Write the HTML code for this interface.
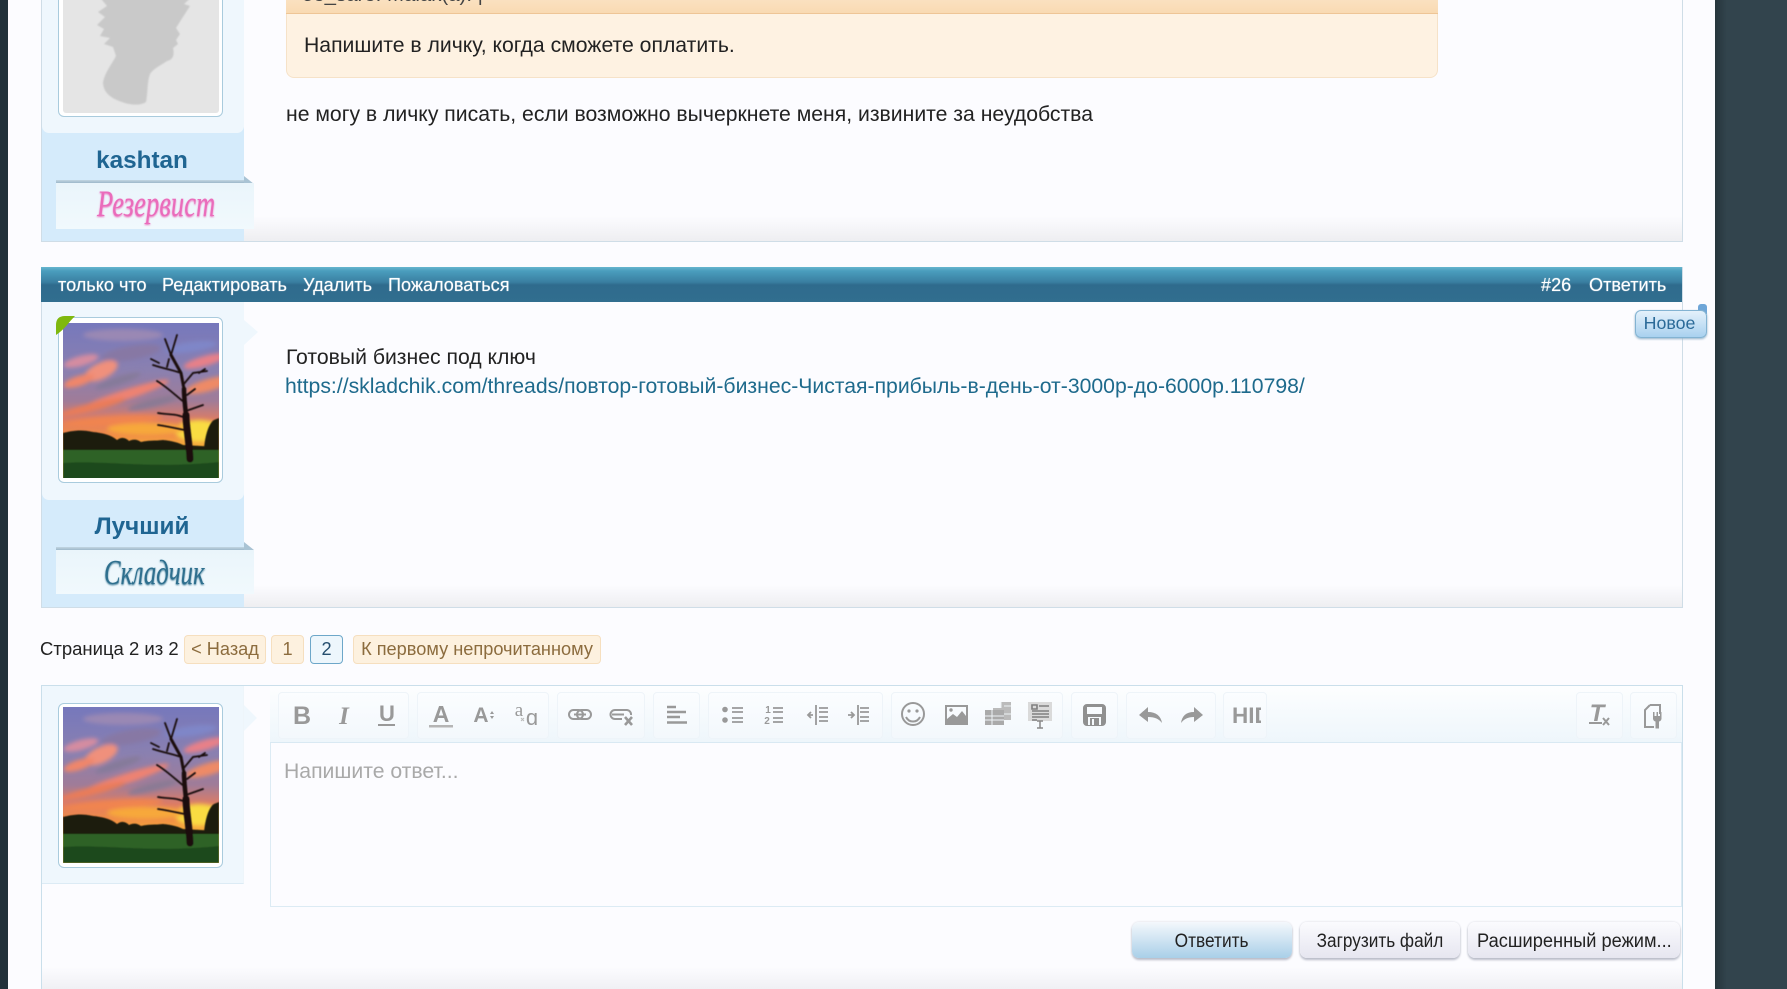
<!DOCTYPE html>
<html lang="ru"><head><meta charset="utf-8"><title>Складчик</title>
<style>
html,body{margin:0;padding:0;width:1787px;height:989px;overflow:hidden;background:#fcfcff}
body{position:relative;font-family:"Liberation Sans","Noto Sans CJK JP",sans-serif;color:#222}
.a{position:absolute;white-space:nowrap;box-sizing:border-box}
.t{font-size:21.2px;line-height:24px;color:#222}
.h{font-size:18.1px;line-height:22px;color:#fff;font-weight:400;text-shadow:0 0 1px rgba(255,255,255,.7)}
.side{background:#eff7fd}
.name{background:#d5ebfb}
.nm{font-weight:700;font-size:24.3px;line-height:30px;color:#1f6592;text-align:center;width:204px;left:40px}
.rib{background:linear-gradient(#eaf5fb,#f1f9fd)}
.shade{background:linear-gradient(#c3d6e2,#9db8ca)}
.script{font-family:"Liberation Serif",serif;font-style:italic;text-shadow:0 1px 2px currentColor}
.frame{border:1px solid #a9cbdd;border-radius:6px;background:#fff;width:165px;height:166px}
.pg{border:1px solid #f6dfbf;background:#fdf1df;border-radius:4px;height:29px;line-height:27px;font-size:18.2px;color:#8c6c3e;text-align:center}
.grp{border:1px solid #eef4f9;border-radius:4px;top:692px;height:47px;background:linear-gradient(#fbfdff,#f3f8fc)}
.btn{top:922px;height:36px;border-radius:7px;line-height:39px;text-align:center;font-size:19px;color:#222;box-shadow:0 2px 2px #b9bcc8,0 0 2px #d8dae0;background:linear-gradient(#fbfbfe,#e6e6f0)}
.btn span{display:inline-block}
</style></head><body>

<svg width="0" height="0" style="position:absolute"><defs>
<filter id="b2" x="-30%" y="-60%" width="160%" height="220%"><feGaussianBlur stdDeviation="2.2"/></filter>
<filter id="b1" x="-10%" y="-10%" width="120%" height="120%"><feGaussianBlur stdDeviation=".6"/></filter>
<filter id="b0" x="-10%" y="-10%" width="120%" height="120%"><feGaussianBlur stdDeviation=".8"/></filter>
<linearGradient id="sky" x1="0" y1="0" x2="0" y2="1"><stop offset="0" stop-color="#7678bc"/><stop offset=".3" stop-color="#8a80b0"/><stop offset=".5" stop-color="#a07c98"/><stop offset=".62" stop-color="#dc7c66"/><stop offset=".72" stop-color="#f08c46"/><stop offset=".8" stop-color="#f6b038"/></linearGradient>
<symbol id="av" viewBox="0 0 156 156">
<rect width="156" height="156" fill="url(#sky)"/>
<g filter="url(#b2)">
<ellipse cx="60" cy="12" rx="40" ry="6" fill="#9a88b4"/>
<ellipse cx="68" cy="30" rx="30" ry="7" fill="#8778a4" transform="rotate(-10 68 30)"/>
<ellipse cx="18" cy="38" rx="18" ry="5" fill="#d58ca0" transform="rotate(-15 18 38)"/>
<ellipse cx="38" cy="48" rx="18" ry="8" fill="#f0907c" transform="rotate(-25 38 48)"/>
<ellipse cx="16" cy="58" rx="16" ry="5" fill="#f0866a" transform="rotate(-18 16 58)"/>
<ellipse cx="55" cy="58" rx="24" ry="4" fill="#857a9a" transform="rotate(-18 55 58)"/>
<ellipse cx="62" cy="72" rx="46" ry="5" fill="#ee8272" transform="rotate(-18 62 72)"/>
<ellipse cx="30" cy="84" rx="34" ry="4" fill="#ea7c58" transform="rotate(-14 30 84)"/>
<ellipse cx="90" cy="80" rx="26" ry="4" fill="#8a7a94" transform="rotate(-14 90 80)"/>
<ellipse cx="142" cy="38" rx="22" ry="5" fill="#e88088" transform="rotate(-16 142 38)"/>
<ellipse cx="128" cy="24" rx="26" ry="5" fill="#7f86c8" transform="rotate(-8 128 24)"/>
<ellipse cx="146" cy="62" rx="24" ry="6" fill="#ee8a66" transform="rotate(-16 146 62)"/>
<ellipse cx="50" cy="98" rx="50" ry="5" fill="#f08450" transform="rotate(-4 50 98)"/>
<ellipse cx="136" cy="108" rx="24" ry="11" fill="#f9dc42"/>
<ellipse cx="84" cy="106" rx="40" ry="6" fill="#f7a83a"/>
</g>
<g filter="url(#b1)">
<path d="M0 110C8 108 18 106 30 109C40 110 48 112 54 117C58 114 62 114 66 118C70 116 74 116 78 119C86 117 92 118 100 117C110 118 116 120 120 122L156 124V130H0Z" fill="#1f1a10"/>
<path d="M141 126C142 112 146 100 151 97L156 95V128Z" fill="#1a1c10"/>
<rect y="127" width="156" height="29" fill="#2f6226"/>
<path d="M0 140C40 137 90 146 156 139V156H0Z" fill="#1e4a1a"/>
<g fill="none" stroke="#1a0f10" stroke-linecap="round">
<path d="M127 136C126 116 123 104 123 92" stroke-width="7"/>
<path d="M123 92C122 82 121 74 121 66" stroke-width="4.500"/>
<path d="M121 66L118 50L108 32" stroke-width="3"/>
<path d="M108 32L102 16M108 32L114 12M118 50C110 47 102 46 90 42M120 62L130 50L144 48M122 80C112 72 104 64 94 58M124 96C114 90 106 92 95 90M126 108C116 106 108 104 95 102M123 88L140 82M124 72L132 66M96 40L88 36M104 44L106 36M136 50L142 46" stroke-width="1.800"/>
</g>
</g>
</symbol>
</defs></svg>

<!-- side strips -->
<div class="a" style="left:0;top:0;width:8px;height:989px;background:#22313a"></div>
<div class="a" style="left:1715px;top:0;width:72px;height:989px;background:linear-gradient(90deg,#26353c,#32444d 12px)"></div>

<!-- POST 1 -->
<div class="a" style="left:41px;top:0;width:1642px;height:242px;border:solid #cfdde7;border-width:0 1px 1px 1px"></div>
<div class="a" style="left:244px;top:216px;width:1438px;height:25px;background:linear-gradient(#fcfcff,#eeeef1)"></div>
<div class="a name" style="left:42px;top:120px;width:202px;height:121px"></div>
<div class="a side" style="left:42px;top:0;width:202px;height:133px;border-radius:0 0 7px 7px"></div>
<div class="a" style="left:58px;top:-20px;width:165px;height:137px;border:1px solid #a9cbdd;border-radius:6px;background:#fff"></div>
<div class="a" style="left:63px;top:-20px;width:156px;height:133px;background:#e5e5e5;border-radius:3px;overflow:hidden">
<svg width="156" height="133" viewBox="63 -20 156 133" style="display:block"><path filter="url(#b0)" fill="#c9c9c9" d="M104 -20L102 0L107 6L98 12L105 17L97 25L104 29L100 36L110 38L104 44L113 47L116 56C112 64 105 72 103 82C103 92 110 98 122 102C130 105 140 106 146 102C148 92 147 82 150 74C154 68 160 66 167 61C172 60 175 56 173 48L178 44L176 40L180 34L176 28L181 20L190 6L184 4L195 -6L196 -20Z"/></svg></div>
<div class="a nm" style="top:146px">kashtan</div>
<svg class="a" style="left:244px;top:176px" width="11" height="8"><path d="M0 0L10 8H0Z" fill="#a9c3d4"/></svg>
<div class="a shade" style="left:56px;top:180px;width:188px;height:3px"></div>
<div class="a rib" style="left:56px;top:183px;width:198px;height:46px"></div>
<div class="a script" style="left:97px;top:183px;font-size:37px;line-height:44px;color:#ea6cbb;transform:scaleX(.72);transform-origin:0 0">Резервист</div>

<!-- quote -->
<div class="a" style="left:286px;top:-10px;width:1152px;height:88px;background:#fef2e2;border:1px solid #f6e2c8;border-radius:0 0 8px 8px"></div>
<div class="a" style="left:286px;top:-10px;width:1152px;height:24px;background:linear-gradient(#fbe6cb,#f9dab2);border-bottom:1px solid #eec596"></div>
<div class="a" style="left:302px;top:-16px;font-size:20.4px;line-height:22px;color:#444">ое_sare: Malak(а): |</div>
<div class="a t" style="left:304px;top:34px">Напишите в личку, когда сможете оплатить.</div>
<div class="a t" style="left:286px;top:103px">не могу в личку писать, если возможно вычеркнете меня, извините за неудобства</div>

<!-- POST 2 -->
<div class="a" style="left:41px;top:267px;width:1642px;height:341px;border:solid #cfdde7;border-width:0 1px 1px 1px"></div>
<div class="a" style="left:244px;top:585px;width:1438px;height:22px;background:linear-gradient(#fcfcff,#eeeef1)"></div>
<div class="a" style="left:41px;top:267px;width:1641px;height:35px;background:linear-gradient(#66b6cf 0,#4a9dbd 4px,#3a7fa1 15px,#2f6b8d 18px,#316e8f 100%)"></div>
<div class="a h" style="left:58px;top:274px">только что</div>
<div class="a h" style="left:162px;top:274px">Редактировать</div>
<div class="a h" style="left:303px;top:274px">Удалить</div>
<div class="a h" style="left:388px;top:274px">Пожаловаться</div>
<div class="a h" style="left:1541px;top:274px">#26</div>
<div class="a h" style="left:1589px;top:274px">Ответить</div>

<div class="a" style="left:1698px;top:304px;width:9px;height:10px;background:#6ea6d8;border-radius:3px 3px 0 0"></div>
<div class="a" style="left:1635px;top:310px;width:72px;height:28px;border:1px solid #83b3d2;border-radius:6px;background:linear-gradient(#e4f1fb,#a9d1ef);box-shadow:0 1px 2px #8fb0c8;color:#2b6a98;font-size:17.8px;line-height:25px;text-align:center;padding-right:3px">Новое</div>

<div class="a name" style="left:42px;top:480px;width:202px;height:127px"></div>
<div class="a side" style="left:42px;top:302px;width:202px;height:198px;border-radius:0 0 7px 7px"></div>
<div class="a" style="left:244px;top:320px;width:0;height:0;border-left:14px solid #eff7fd;border-top:12px solid transparent;border-bottom:13px solid transparent"></div>
<div class="a frame" style="left:58px;top:317px"></div>
<svg class="a" style="left:63px;top:323px" width="156" height="155"><use href="#av" width="156" height="156"/></svg>
<svg class="a" style="left:0;top:0" width="100" height="340" viewBox="0 0 100 340"><path d="M75 316H65Q56 316 56 325V335Q62 331 67 325Q71 320 75 316Z" fill="#7fb80e"/></svg>
<div class="a nm" style="top:512px">Лучший</div>
<svg class="a" style="left:244px;top:542px" width="11" height="8"><path d="M0 0L10 8H0Z" fill="#a9c3d4"/></svg>
<div class="a shade" style="left:56px;top:547px;width:188px;height:3px"></div>
<div class="a rib" style="left:56px;top:550px;width:198px;height:44px"></div>
<div class="a script" style="left:104px;top:551px;font-size:35px;line-height:44px;color:#2e6f8e;transform:scaleX(.71);transform-origin:0 0">Складчик</div>

<div class="a t" style="left:286px;top:346px">Готовый бизнес под ключ</div>
<div class="a t" style="left:285px;top:375px;color:#1e6a8c">https://skladchik.com/threads/повтор-готовый-бизнес-Чистая-прибыль-в-день-от-3000р-до-6000р.110798/</div>

<!-- PAGINATION -->
<div class="a" style="left:40px;top:637px;font-size:18.5px;line-height:24px;color:#222">Страница 2 из 2</div>
<div class="a pg" style="left:184px;top:635px;width:82px">&lt; Назад</div>
<div class="a pg" style="left:271px;top:635px;width:33px">1</div>
<div class="a pg" style="left:310px;top:635px;width:33px;background:#edf6fc;border-color:#6da7c9;color:#254e6e">2</div>
<div class="a pg" style="left:353px;top:635px;width:248px">К первому непрочитанному</div>

<!-- REPLY -->
<div class="a" style="left:41px;top:685px;width:1642px;height:320px;border:1px solid #cadfeb"></div>
<div class="a" style="left:42px;top:952px;width:1640px;height:37px;background:linear-gradient(#fcfcff 40%,#f0f0f4)"></div>
<div class="a side" style="left:42px;top:686px;width:202px;height:198px;border-bottom:1px solid #dcebf5;border-right:1px solid #eef5fa"></div>
<div class="a" style="left:244px;top:705px;width:0;height:0;border-left:13px solid #eff7fd;border-top:13px solid transparent;border-bottom:13px solid transparent"></div>
<div class="a frame" style="left:58px;top:703px;height:165px"></div>
<svg class="a" style="left:63px;top:707px" width="156" height="156"><use href="#av" width="156" height="156"/></svg>

<div class="a" style="left:270px;top:686px;width:1412px;height:221px;border:solid #dcebf4;border-width:0 1px 1px 1px;background:#fcfcff"></div>
<div class="a" style="left:270px;top:686px;width:1412px;height:57px;background:linear-gradient(#fdfeff,#eef6fb);border-bottom:1px solid #d9e9f3"></div>
<div class="a grp" style="left:278px;width:131px"></div>
<div class="a grp" style="left:417px;width:132px"></div>
<div class="a grp" style="left:557px;width:88px"></div>
<div class="a grp" style="left:653px;width:47px"></div>
<div class="a grp" style="left:708px;width:175px"></div>
<div class="a grp" style="left:891px;width:172px"></div>
<div class="a grp" style="left:1071px;width:47px"></div>
<div class="a grp" style="left:1126px;width:90px"></div>
<div class="a grp" style="left:1223px;width:44px"></div>
<div class="a grp" style="left:1576px;width:47px"></div>
<div class="a grp" style="left:1630px;width:47px"></div>

<svg class="a" style="left:0;top:0" width="1787" height="989" viewBox="0 0 1787 989" fill="#999" stroke="none">
<text x="302" y="724" font-size="25" font-weight="700" text-anchor="middle" font-family="Liberation Sans">B</text>
<text x="344" y="724" font-size="25" font-weight="700" font-style="italic" text-anchor="middle" font-family="Liberation Serif">I</text>
<text x="387" y="721" font-size="22" font-weight="700" text-anchor="middle" font-family="Liberation Sans">U</text>
<rect x="378" y="724" width="17" height="2"/>
<text x="441" y="722" font-size="23" font-weight="700" text-anchor="middle" font-family="Liberation Sans">A</text>
<rect x="429" y="725" width="24" height="2.5" fill="#b5b5b5"/>
<text x="481" y="722" font-size="21" font-weight="700" text-anchor="middle" font-family="Liberation Sans">A</text>
<path d="M492 711l2 3h-4zM492 719l2-3h-4z"/>
<text x="519" y="716" font-size="19" text-anchor="middle" font-family="Liberation Serif">a</text>
<text x="532" y="725" font-size="22" text-anchor="middle" font-family="Liberation Sans">ɑ</text>
<path d="M521 718l3 3m0-3l-3 3" stroke="#bbb" fill="none"/>
<g fill="none" stroke="#999" stroke-width="2">
<rect x="569" y="710" width="14" height="9" rx="4.5"/><rect x="577" y="710" width="14" height="9" rx="4.5"/>
<path d="M574 714.5h12"/>
<path d="M624 710h-9a4.5 4.500 0 0 0 0 9h7M620 710h7a4.500 4.500 0 0 1 4 5M612 714.500h12"/>
<path d="M625 717l7 8m0-8l-7 8" stroke-width="2.6"/>
<path d="M667 707h9M667 712h19M667 717h13M667 722.500h20" stroke-width="2.6"/>
<path d="M732 708h11M732 712h11M732 718h11M732 722h11" stroke-width="1.8"/>
<path d="M773 708h10M773 712h10M773 718h10M773 722h10" stroke-width="1.8"/>
<path d="M816 705v20M819 708h9M819 712h9M819 717h9M819 721h9" stroke-width="1.8"/>
<path d="M813 715h-5m3-3l-3 3 3 3" stroke-width="1.8"/>
<path d="M858 705v20M860 708h9M860 712h9M860 717h9M860 721h9" stroke-width="1.8"/>
<path d="M848 715h6m-3-3l3 3-3 3" stroke-width="1.8"/>
<circle cx="913" cy="714" r="11"/>
<path d="M906 717c3 6 11 6 14 0"/>
<rect x="946" y="706" width="21" height="18" stroke-width="2"/>
</g>
<circle cx="725" cy="709.500" r="2.800"/><circle cx="725" cy="720" r="2.800"/>
<text x="768" y="713" font-size="10" font-weight="700" text-anchor="middle" font-family="Liberation Sans">1</text>
<text x="767" y="724" font-size="10" font-weight="700" text-anchor="middle" font-family="Liberation Sans">2</text>
<circle cx="909" cy="711" r="1.600"/><circle cx="917" cy="711" r="1.600"/>
<path d="M947 723v-4l6-5 4 3 5-6 4 5v7z"/><circle cx="951" cy="710" r="1.700"/>
<path d="M1001 702h10v18h-10zM993 708h9v17h-9z" fill="#bbb"/><rect x="985" y="710" width="19" height="15" fill="#aaa"/>
<path d="M985 716h19M985 720h19M992 710v15M1001 702v6M1004 706h7M1004 714h7" stroke="#eef3f6" fill="none"/>
<rect x="1028" y="702" width="24" height="19" fill="#dadada"/>
<path d="M1032 705h5v4h-5zM1039 706h10M1032 711h17M1032 714h17M1032 717h17M1032 720h5" stroke="#7f7f7f" stroke-width="1.600" fill="none"/>
<path d="M1037 721h6M1037 728h6M1040 721v7" stroke="#888" stroke-width="1.500" fill="none"/>
<path d="M1087 704h15a4 4 0 0 1 4 4v14a4 4 0 0 1-4 4h-15a4 4 0 0 1-4-4v-14a4 4 0 0 1 4-4zM1087 707v7h15v-7zM1088 725h2v-7h9v7h2v-8h-13zM1092 719v6h2v-6z" fill-rule="evenodd" fill="#909090"/>
<path d="M1139 715l9-8v5c8 0 13 4 14 11-3-4-7-6-14-6v5z"/>
<path d="M1203 715l-9-8v5c-8 0-12 4-13 11 3-4 7-6 13-6v5z"/>
<defs><clipPath id="hc"><rect x="1230" y="700" width="31" height="30"/></clipPath></defs>
<text x="1232" y="723" font-size="22.500" font-weight="700" clip-path="url(#hc)" font-family="Liberation Sans">HIDE</text>
<text x="1597" y="721" font-size="24" font-weight="700" font-style="italic" text-anchor="middle" font-family="Liberation Sans">T</text>
<rect x="1589" y="722" width="13" height="2"/>
<path d="M1603 718l6 7m0-7l-6 7" stroke="#999" stroke-width="2" fill="none"/>
<path d="M1650 705h10v9M1650 705l-5 5v17h9" fill="none" stroke="#999" stroke-width="2"/>
<path d="M1653 712v6a3 3 0 0 0 2.500 3.500v7h3.500v-7a3 3 0 0 0 2.500-3.500v-6l-1.500 0v4h-2v-4h-1.500v4h-2v-4z"/>
</svg>

<div class="a" style="left:284px;top:760px;font-size:21.2px;line-height:24px;color:#a9a9a9">Напишите ответ...</div>

<div class="a btn" style="left:1132px;width:160px;background:linear-gradient(#f4f8fc,#a9cfe8)"><span style="transform:scaleX(.91)">Ответить</span></div>
<div class="a btn" style="left:1300px;width:160px"><span style="transform:scaleX(.905)">Загрузить файл</span></div>
<div class="a btn" style="left:1468px;width:212px"><span style="transform:scaleX(.96)">Расширенный режим...</span></div>

</body></html>
